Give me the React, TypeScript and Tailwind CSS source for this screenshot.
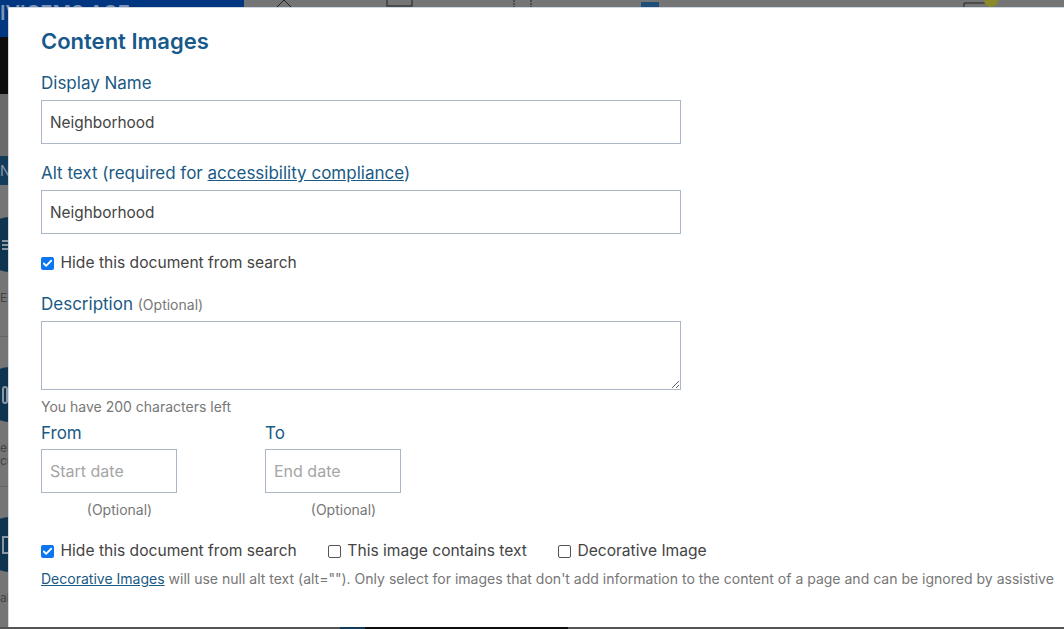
import { Check } from 'lucide-react';

const labelCls = "block text-[17px] leading-[22px] text-[#1a5a85]";
const inputCls = "block h-[44px] border border-[#a9b7c6] bg-white px-2 text-[15.4px] text-[#444] placeholder:text-[16px] placeholder:text-[#a5a5a5] outline-none";

function CheckBox({ checked, label }: { checked?: boolean; label: string }) {
  return (
    <label className="flex items-center gap-[6.5px] text-[15.6px] leading-5 text-[#444]">
      {checked ? (
        <span className="flex h-[13px] w-[13px] items-center justify-center rounded-[2px] bg-[#0b76ef]">
          <Check size={11} strokeWidth={4} className="text-white" />
        </span>
      ) : (
        <span className="h-[13px] w-[13px] rounded-[2px] border border-[#555] bg-white" />
      )}
      {label}
    </label>
  );
}

// the page behind the dialog, only a sliver of each of these shows
function SideItem({ caption, children }: { caption: string; children: React.ReactNode }) {
  return (
    <div className="h-[150px] shrink-0 border-b border-[#666] pt-[30px]">
      <div className="-ml-[18px] flex h-[55px] w-[56px] items-center justify-end rounded-full bg-[#0f3450] pr-[30px] text-[#8a97a3]">
        {children}
      </div>
      <p className="mt-[19px] w-[9px] overflow-hidden text-[12px] leading-[13px] text-[#444]">{caption}</p>
    </div>
  );
}

function Backdrop() {
  return (
    <div className="absolute inset-0 flex flex-col overflow-hidden bg-[#757575]">
      <div className="flex h-[37px] shrink-0">
        <div className="w-[244px] overflow-hidden whitespace-nowrap bg-[#003780] pt-[3px] text-[20px] font-semibold leading-[20px] text-[#7f93b5]">IVICEMS AGE:</div>
        <svg width="820" height="7" className="text-[#222]">
          <path d="M33 7 L40 0 L47 7" fill="none" stroke="currentColor" />
          <rect x="143" y="-3" width="25" height="9" fill="none" stroke="currentColor" />
          <path d="M270 0 V7 M287 0 V7" stroke="currentColor" strokeDasharray="2 1" />
          <rect x="397" y="2" width="18" height="5" fill="#1f4e79" />
          <path d="M720 3 H742 M720 3 V7" stroke="currentColor" fill="none" />
          <circle cx="747" cy="0" r="7" fill="#8a8a2a" />
        </svg>
      </div>
      <div className="h-[57px] w-[9px] shrink-0 bg-[#0d0d0d]" />
      <div className="h-[62px] w-[9px] shrink-0 bg-[#6b6b6b]" />
      <div className="mb-[2px] h-[29px] w-[9px] shrink-0 overflow-hidden whitespace-nowrap bg-[#123c5a] text-[14px] leading-[29px] text-[#8a97a3]">NT</div>
      <SideItem caption="Ed">
        <div className="flex w-[6px] flex-col gap-[2px]">
          <span className="h-[2px] bg-[#8a97a3]" />
          <span className="h-[2px] bg-[#8a97a3]" />
          <span className="h-[2px] bg-[#8a97a3]" />
        </div>
      </SideItem>
      <SideItem caption="el cu">
        <div className="h-[18px] w-[6px] rounded-sm border-2 border-[#8a97a3]" />
      </SideItem>
      <SideItem caption="al">
        <div className="h-[18px] w-[6px] border-2 border-r-0 border-[#8a97a3]" />
      </SideItem>
      <div className="absolute bottom-0 left-0 flex h-[2px] w-full bg-[#555]">
        <div className="ml-[340px] w-[25px] bg-[#123c5a]" />
        <div className="w-[203px] bg-[#0d0d0d]" />
      </div>
    </div>
  );
}

export default function App() {
  return (
    <div className="relative h-[629px] w-[1064px] overflow-hidden font-['Inter','Open_Sans',sans-serif]">
      <Backdrop />
      <div className="absolute left-[8px] top-[7px] h-[620px] w-[1056px] border-t border-l border-[#cfd8e3] bg-white pl-[32px] pt-[19px]">
        <h2 className="text-[22px] font-semibold leading-[28px] text-[#17598a]">Content Images</h2>
        <div className="mt-[17px]">
          <span className={labelCls}>Display Name</span>
          <input readOnly value="Neighborhood" className={`${inputCls} mt-[6px] w-[640px]`} />
        </div>
        <div className="mt-[18px]">
          <span className={labelCls}>
            Alt text (required for <a className="underline">accessibility compliance</a>)
          </span>
          <input readOnly value="Neighborhood" className={`${inputCls} mt-[6px] w-[640px]`} />
        </div>
        <div className="mt-[19px]">
          <CheckBox checked label="Hide this document from search" />
        </div>
        <div className="mt-[20px]">
          <span className={labelCls}>
            Description <span className="text-[14px] text-[#777]">(Optional)</span>
          </span>
          <textarea readOnly className="mt-[5px] block h-[69px] w-[640px] border border-[#a9b7c6] outline-none" />
          <p className="mt-[8px] text-[14px] leading-[18px] text-[#777]">You have 200 characters left</p>
        </div>
        <div className="mt-[6px] flex gap-[88px]">
          {[['From', 'Start date'], ['To', 'End date']].map(([label, hint]) => (
            <div key={label} className="w-[136px]">
              <span className={labelCls}>{label}</span>
              <input readOnly placeholder={hint} className={`${inputCls} mt-[5px] w-[136px]`} />
              <p className="mt-[8px] pl-[21px] text-center text-[14px] leading-[18px] text-[#777]">(Optional)</p>
            </div>
          ))}
        </div>
        <div className="mt-[22px] flex gap-[31px]">
          <CheckBox checked label="Hide this document from search" />
          <CheckBox label="This image contains text" />
          <CheckBox label="Decorative Image" />
        </div>
        <p className="mt-[9px] whitespace-nowrap text-[14.03px] leading-[18px] text-[#777]">
          <a className="text-[#1a5a85] underline">Decorative Images</a> will use null alt text (alt=""). Only select for images that don't add information to the content of a page and can be ignored by assistive
        </p>
      </div>
    </div>
  );
}
